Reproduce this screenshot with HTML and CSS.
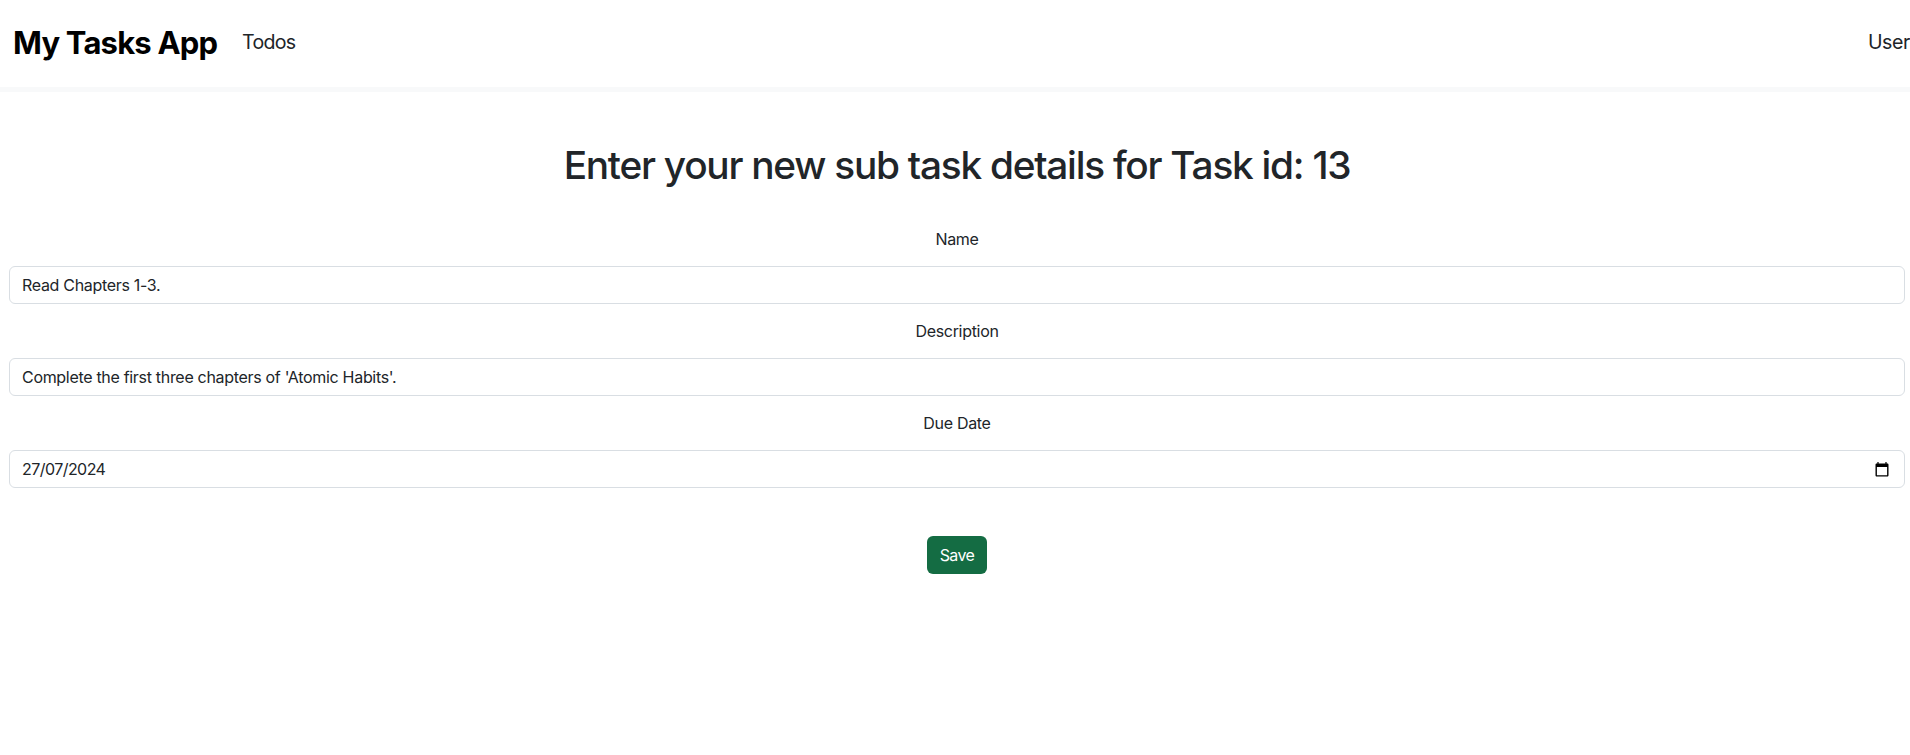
FILE: index.html
```html
<!DOCTYPE html>
<html lang="en">
<head>
<meta charset="utf-8">
<title>My Tasks App</title>
<link rel="stylesheet" href="styles.css">
</head>
<body>
<header class="navbar">
  <a class="brand" href="#">My Tasks App</a>
  <a class="nav-link todos" href="#">Todos</a>
  <a class="nav-link user" href="#">User</a>
</header>
<main class="container">
  <h1 class="title">Enter your new sub task details for Task id: 13</h1>
  <form class="form">
    <label class="label" for="name">Name</label>
    <input class="control" id="name" type="text" value="Read Chapters 1-3.">
    <label class="label" for="description">Description</label>
    <input class="control" id="description" type="text" value="Complete the first three chapters of 'Atomic Habits'.">
    <label class="label">Due Date</label>
    <div class="control date-control">
      <span class="date">27/07/2024</span>
      <svg class="calendar" width="14" height="15" viewBox="0 0 14 15" aria-hidden="true">
        <path fill="#000" fill-rule="evenodd" d="M2.4 0h1.2v1.5h6.8V0h1.2v1.5h.6c.8 0 1.3.5 1.3 1.3v10.4c0 .8-.5 1.3-1.3 1.3H1.8C1 14.5.5 14 .5 13.2V2.8C.5 2 1 1.5 1.8 1.5h.6zM1.900 5v8.200h10.200V5z"/>
      </svg>
    </div>
    <button class="save" type="button">Save</button>
  </form>
</main>
</body>
</html>
```
FILE: styles.css
```css
* { box-sizing: border-box; }
body {
  margin: 0;
  background: #fff;
  color: #212529;
  font: 400 16px/24px Inter, "Liberation Sans", sans-serif;
  letter-spacing: -0.31px;
  overflow: hidden;
}
.navbar {
  display: flex;
  align-items: center;
  height: 92px;
  padding: 0 0 3px 13px;
  border-bottom: 5px solid #f8f9fa;
}
.brand, .nav-link { text-decoration: none; white-space: nowrap; }
.brand {
  width: 229px;
  color: #000;
  font-size: 31px;
  font-weight: 700;
  line-height: 48px;
  letter-spacing: -0.8px;
  padding-top: 2px;
}
.nav-link {
  color: #212529;
  font-size: 19.6px;
  line-height: 30px;
  letter-spacing: -0.7px;
}
.user { margin-left: auto; letter-spacing: -0.4px; }
.container { padding: 0 5px 0 9px; }
.title {
  margin: 49px 0 0;
  font-size: 38.8px;
  font-weight: 500;
  line-height: 48px;
  letter-spacing: -1.25px;
  text-align: center;
}
.form { display: flex; flex-direction: column; padding-top: 38px; }
.label { margin-bottom: 15px; text-align: center; }
.control {
  display: flex;
  align-items: center;
  width: 100%;
  height: 38px;
  margin-bottom: 15px;
  padding: 6px 12px;
  border: 1px solid #d9dee3;
  border-radius: 6px;
  background: #fff;
  color: #212529;
  font: inherit;
  letter-spacing: inherit;
}
.date-control { justify-content: space-between; padding-right: 15px; }
.date { letter-spacing: -0.55px; }
.save {
  align-self: center;
  width: 60px;
  height: 38px;
  margin-top: 33px;
  padding: 0;
  border: 0;
  border-radius: 6px;
  background: #146c43;
  color: #fff;
  font: inherit;
  letter-spacing: -0.6px;
}
```
